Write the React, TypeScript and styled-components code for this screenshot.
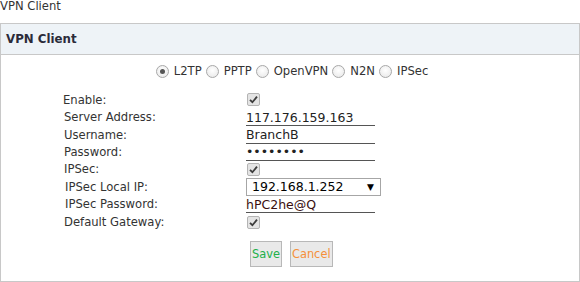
import React from "react";
import styled, { createGlobalStyle } from "styled-components";

const Global = createGlobalStyle`
  html, body { margin: 0; padding: 0; background: #fff; }
  body { font-family: "DejaVu Sans", Verdana, sans-serif; font-size: 11.6px; color: #333; }
`;

const Page = styled.div`
  width: 580px;
  height: 282px;
  display: flex;
  flex-direction: column;
`;

const PageTitle = styled.div`
  height: 23px;
  line-height: 12px;
  color: #333;
`;

const Panel = styled.div`
  flex: 1;
  border: 1px solid #c8c8c8;
  display: flex;
  flex-direction: column;
`;

const PanelHeader = styled.div`
  height: 30px;
  background: #eef3f7;
  border-bottom: 1px solid #c8c8c8;
  display: flex;
  align-items: center;
  padding-left: 5px;
  font-weight: bold;
  font-size: 11.8px;
  color: #2b2b3a;
`;

const RadioRow = styled.div`
  display: flex;
  align-items: center;
  justify-content: center;
  height: 32px;
  padding-left: 8px;
`;

const RadioItem = styled.label`
  display: flex;
  align-items: center;
  gap: 5px;
  margin-right: 4px;
`;

const Radio = styled.span<{ $on?: boolean }>`
  width: 11px;
  height: 11px;
  border-radius: 50%;
  border: 1px solid #a8a8a8;
  background: radial-gradient(circle at 50% 40%, #ffffff 0%, #e6e6e6 100%);
  display: inline-flex;
  align-items: center;
  justify-content: center;
  &::after {
    content: "";
    width: 5px;
    height: 5px;
    border-radius: 50%;
    background: ${(p) => (p.$on ? "#555" : "transparent")};
  }
`;

const Form = styled.div`
  display: grid;
  grid-template-columns: 183px 140px;
  padding-left: 62px;
  padding-top: 4px;
`;

const Label = styled.div<{ $h: number; $shift?: number }>`
  height: ${(p) => p.$h}px;
  display: flex;
  align-items: center;
  padding-left: ${(p) => p.$shift ?? 1}px;
`;

const Cell = styled.div<{ $h: number }>`
  height: ${(p) => p.$h}px;
  display: flex;
  align-items: center;
`;

const Check = styled.span`
  width: 11px;
  height: 11px;
  margin-left: 1px;
  border: 1px solid #b4b4b4;
  border-radius: 2px;
  background: #e4e4e4;
  display: inline-flex;
  align-items: center;
  justify-content: center;
`;

const Line = styled.div<{ $color?: string }>`
  width: 129px;
  height: 16px;
  border-bottom: 1px solid #555;
  display: flex;
  align-items: center;
  font-size: 12.5px;
  color: ${(p) => p.$color ?? "#222"};
  margin-top: 1px;
`;

const Select = styled.div`
  border: 1px solid #a6a6a6;
  display: flex;
  align-items: center;
  justify-content: space-between;
  padding: 0 6px 0 5px;
  box-sizing: border-box;
  width: 135px;
  height: 18px;
  font-size: 12.5px;
  color: #000;
`;

const Arrow = styled.span`
  font-size: 9px;
  color: #000;
`;

const Buttons = styled.div`
  display: flex;
  gap: 8px;
  padding-left: 249px;
  padding-top: 10px;
`;

const Button = styled.button<{ $color: string }>`
  height: 26px;
  padding: 0 1px;
  background: #e9e9e9;
  border: 1px solid #b8b8b8;
  font-family: "DejaVu Sans", Verdana, sans-serif;
  font-size: 11.4px;
  color: ${(p) => p.$color};
`;

const Tick = () => (
  <svg width="9" height="9" viewBox="0 0 9 9">
    <path d="M1 4.8 L3.4 7.2 L8 1.6" fill="none" stroke="#3c3c3c" strokeWidth="1.8" />
  </svg>
);

const rows: Array<{ label: string; h: number; shift?: number; value: React.ReactNode }> = [
  { label: "Enable:", h: 17, shift: 0, value: <Check><Tick /></Check> },
  { label: "Server Address:", h: 18, value: <Line>117.176.159.163</Line> },
  { label: "Username:", h: 17, value: <Line>BranchB</Line> },
  { label: "Password:", h: 17, value: <Line>••••••••</Line> },
  { label: "IPSec:", h: 18, value: <Check><Tick /></Check> },
  { label: "IPSec Local IP:", h: 17, shift: 2, value: <Select>192.168.1.252<Arrow>▼</Arrow></Select> },
  { label: "IPSec Password:", h: 18, shift: 2, value: <Line $color="#3a1010">hPC2he@Q</Line> },
  { label: "Default Gateway:", h: 18, value: <Check><Tick /></Check> },
];

export default function App() {
  return (
    <Page>
      <Global />
      <PageTitle>VPN Client</PageTitle>
      <Panel>
        <PanelHeader>VPN Client</PanelHeader>
        <RadioRow>
          {["L2TP", "PPTP", "OpenVPN", "N2N", "IPSec"].map((t, i) => (
            <RadioItem key={t}>
              <Radio $on={i === 0} />
              {t}
            </RadioItem>
          ))}
        </RadioRow>
        <Form>
          {rows.map((r) => (
            <React.Fragment key={r.label}>
              <Label $h={r.h} $shift={r.shift}>{r.label}</Label>
              <Cell $h={r.h}>{r.value}</Cell>
            </React.Fragment>
          ))}
        </Form>
        <Buttons>
          <Button $color="#22b04a">Save</Button>
          <Button $color="#f5903a">Cancel</Button>
        </Buttons>
      </Panel>
    </Page>
  );
}
